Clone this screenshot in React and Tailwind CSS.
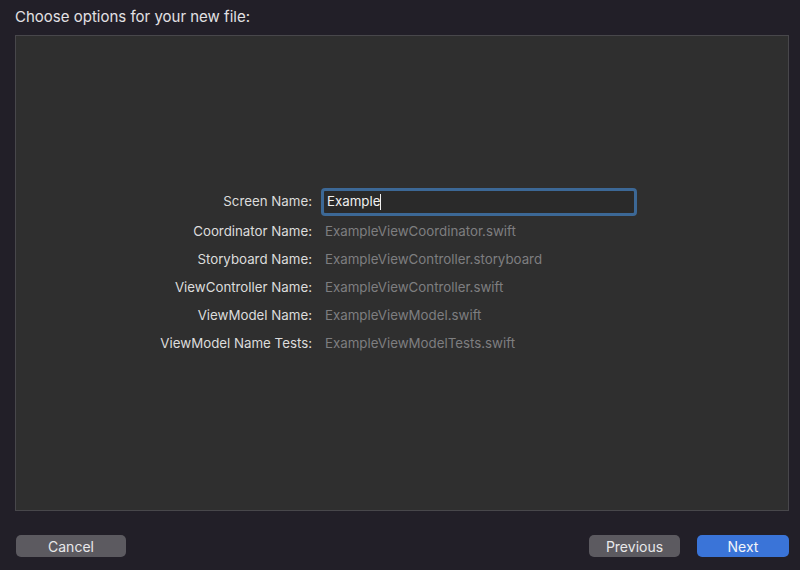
import { useState } from 'react'

const rows = [
  { label: 'Coordinator Name:', value: 'ExampleViewCoordinator.swift' },
  { label: 'Storyboard Name:', value: 'ExampleViewController.storyboard' },
  { label: 'ViewController Name:', value: 'ExampleViewController.swift' },
  { label: 'ViewModel Name:', value: 'ExampleViewModel.swift' },
  { label: 'ViewModel Name Tests:', value: 'ExampleViewModelTests.swift' },
]

export default function App() {
  const [screenName] = useState('Example')

  return (
    <div className="w-[800px] h-[570px] bg-[#221f28] flex flex-col font-['Inter','Liberation_Sans',sans-serif] text-[#dedde0] select-none">
      <h1 className="h-[35px] pl-[15px] pt-[7px] text-[15px] leading-[20px] text-[#e2e1e4]">
        Choose options for your new file:
      </h1>

      <div className="ml-[15px] mr-[11px] h-[476px] bg-[#2f2f2f] border border-[#48474b] flex items-center justify-center">
        <div className="grid grid-cols-[152px_316px] gap-x-[9px] pr-[7px] text-[13.3px]">
          <div className="h-[28px] flex items-center justify-end text-[#dcdcdc]">Screen Name:</div>
          <div className="h-[28px] mb-[2px] rounded-[4px] border-[3px] border-[#3c6896] bg-[#2a2a2a] flex items-center pl-[3px]">
            <span className="text-[#f0f0f0]">{screenName}</span>
            <span className="w-px h-[16px] bg-[#f0f0f0]" />
          </div>

          {rows.map((row) => (
            <div key={row.label} className="contents">
              <div className="h-[28px] flex items-center justify-end text-[#dcdcdc] whitespace-nowrap">{row.label}</div>
              <div className="h-[28px] flex items-center pl-[4px] text-[#7e7e80] whitespace-nowrap">{row.value}</div>
            </div>
          ))}
        </div>
      </div>

      <div className="flex items-center pl-[16px] pr-[11px] pt-[24px]">
        <button className="w-[110px] h-[22px] rounded-[5px] bg-[#5c5a60] text-[14px] text-[#e8e8ea]">Cancel</button>
        <div className="flex-1" />
        <button className="w-[91px] h-[22px] rounded-[5px] bg-[#5c5a60] text-[14px] text-[#e8e8ea]">Previous</button>
        <button className="ml-[17px] w-[92px] h-[22px] rounded-[5px] bg-[#3a74d8] text-[14px] text-[#f2f4f8]">Next</button>
      </div>
    </div>
  )
}
